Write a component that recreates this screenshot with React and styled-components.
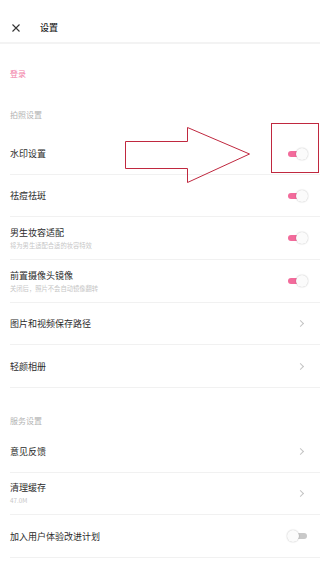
import styled, { createGlobalStyle } from "styled-components";

const GlobalStyle = createGlobalStyle`
  html, body {
    margin: 0;
    padding: 0;
    background: #fff;
  }
  body {
    font-family: "Noto Sans CJK SC", "Noto Sans", sans-serif;
    color: #333;
  }
`

const Page = styled.div`
  position: relative;
  width: 320px;
  height: 568px;
  overflow: hidden;
  background: #fff;
`

const Header = styled.header`
  height: 44px;
  padding-top: 14px;
  box-sizing: border-box;
  display: flex;
  align-items: center;
  border-bottom: 2px solid #f3f3f3;
  svg {
    margin-left: 12px;
    width: 8px;
    height: 8px;
  }
`

const Title = styled.h1`
  margin: 0 0 0 20px;
  font-size: 9px;
  font-weight: 500;
  color: #222;
  line-height: 28px;
`

const Login = styled.div`
  height: 58px;
  display: flex;
  align-items: center;
  padding-left: 10px;
  font-size: 8px;
  color: #f27ba6;
`

const SectionTitle = styled.div`
  height: ${({ $h }) => $h}px;
  padding: 0 0 ${({ $pb }) => $pb}px 10px;
  box-sizing: border-box;
  display: flex;
  align-items: flex-end;
  font-size: 8px;
  line-height: 12px;
  color: #b3b3b3;
`

const Row = styled.div`
  height: ${({ $h }) => $h || 42}px;
  margin-left: 10px;
  padding-right: 12px;
  box-sizing: border-box;
  display: flex;
  align-items: center;
  justify-content: space-between;
  border-bottom: 1px solid #f1f1f1;
`

const Texts = styled.div`
  display: flex;
  flex-direction: column;
  gap: 2px;
`

const Label = styled.span`
  font-size: 9px;
  line-height: 13px;
  color: #2b2b2b;
`

const Sub = styled.span`
  font-size: 6.3px;
  line-height: 10px;
  color: #c6c6c6;
`

const Switch = styled.span`
  position: relative;
  width: 20px;
  height: 12px;
  display: inline-block;
  &::before {
    content: "";
    position: absolute;
    left: ${({ $on }) => ($on ? 0 : 4)}px;
    top: 3px;
    width: 15px;
    height: 6px;
    border-radius: 3px;
    background: ${({ $on }) => ($on ? "#f26b9b" : "#c9c9c9")};
  }
  &::after {
    content: "";
    position: absolute;
    left: ${({ $on }) => ($on ? 8 : -1)}px;
    top: 0;
    width: 12px;
    height: 12px;
    border-radius: 50%;
    background: #fbfbfb;
    box-shadow: 0 0 1.5px rgba(0, 0, 0, 0.3);
  }
`

const Chevron = styled.span`
  width: 4px;
  height: 4px;
  margin-right: 5px;
  border-top: 1px solid #c4c4c4;
  border-right: 1px solid #c4c4c4;
  transform: rotate(45deg);
`

const Overlay = styled.svg`
  position: absolute;
  left: 0;
  top: 0;
  pointer-events: none;
`

const Close = () => (
  <svg viewBox="0 0 8 8">
    <path d="M0.5 0.5L7.5 7.5M7.5 0.5L0.5 7.5" stroke="#333" strokeWidth="1.1" />
  </svg>
)

const App = () => {
  return (
    <Page>
      <GlobalStyle />
      <Header>
        <Close />
        <Title>设置</Title>
      </Header>
      <Login>登录</Login>

      <SectionTitle $h={31} $pb={12}>拍照设置</SectionTitle>
      <Row>
        <Label>水印设置</Label>
        <Switch $on />
      </Row>
      <Row>
        <Label>祛痘祛斑</Label>
        <Switch $on />
      </Row>
      <Row $h={43}>
        <Texts>
          <Label>男生妆容适配</Label>
          <Sub>将为男生适配合适的妆容特效</Sub>
        </Texts>
        <Switch $on />
      </Row>
      <Row $h={43}>
        <Texts>
          <Label>前置摄像头镜像</Label>
          <Sub>关闭后，照片不会自动镜像翻转</Sub>
        </Texts>
        <Switch $on />
      </Row>
      <Row>
        <Label>图片和视频保存路径</Label>
        <Chevron />
      </Row>
      <Row $h={43}>
        <Label>轻颜相册</Label>
        <Chevron />
      </Row>

      <SectionTitle $h={43} $pb={4}>服务设置</SectionTitle>
      <Row>
        <Label>意见反馈</Label>
        <Chevron />
      </Row>
      <Row>
        <Texts>
          <Label>清理缓存</Label>
          <Sub>47.0M</Sub>
        </Texts>
        <Chevron />
      </Row>
      <Row $h={43}>
        <Label>加入用户体验改进计划</Label>
        <Switch />
      </Row>

      <Overlay width="320" height="568" viewBox="0 0 320 568">
        <rect x="271.5" y="123.5" width="47" height="49" fill="none" stroke="#c0283f" strokeWidth="1" />
        <polygon
          points="125.5,141.5 187.5,141.5 187.5,127.5 249.5,154 187.5,182.5 187.5,168.5 125.5,168.5"
          fill="none"
          stroke="#c0283f"
          strokeWidth="1"
        />
      </Overlay>
    </Page>
  )
}

export default App
